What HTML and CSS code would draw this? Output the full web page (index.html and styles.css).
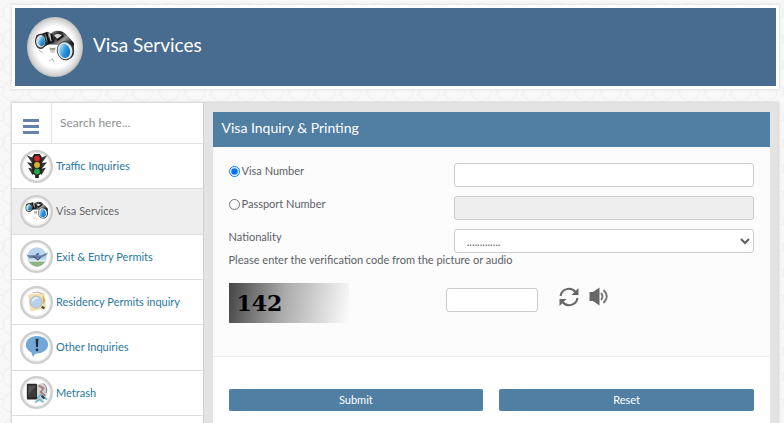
FILE: index.html
```html
<!DOCTYPE html>
<html lang="en">
<head>
    <meta charset="UTF-8">
    <meta name="viewport" content="width=device-width, initial-scale=1.0">
    <title>Visa Services</title>
    <link rel="stylesheet" href="styles.css">
</head>
<body>
<svg width="0" height="0" class="defs" aria-hidden="true">
    <defs>
        <linearGradient id="metal" x1="0" y1="0" x2="1" y2="1">
            <stop offset="0" stop-color="#aaa"/>
            <stop offset="0.3" stop-color="#222"/>
            <stop offset="0.5" stop-color="#999"/>
            <stop offset="0.7" stop-color="#222"/>
            <stop offset="1" stop-color="#111"/>
        </linearGradient>
        <linearGradient id="lens" x1="0" y1="0" x2="1" y2="1">
            <stop offset="0" stop-color="#eef8ff"/>
            <stop offset="0.5" stop-color="#2d9be0"/>
            <stop offset="1" stop-color="#0d5f9f"/>
        </linearGradient>
        <symbol id="binoculars" viewBox="0 0 44 40">
            <path d="M15 9 L20 4 Q28 1 34 7 L42 16 L41 27 L26 18 L14 17Z" fill="url(#metal)"/>
            <path d="M2 8 L14 4 Q21 6 20 15 L10 20Z" fill="url(#metal)"/>
            <path d="M21 8 Q25 5 29 8 L25 12Z" fill="#d8d8d8"/>
            <path d="M13 5 L16 16 M18 6 L20 15 M24 13 L31 8" stroke="#111" stroke-width="2"/>
            <path d="M16 6 L18 14" stroke="#ddd"/>
            <ellipse cx="7" cy="14" rx="6" ry="8" fill="#333"/>
            <ellipse cx="7" cy="14" rx="4.8" ry="6.500" fill="#d5dde2"/>
            <ellipse cx="8" cy="14" rx="3.4" ry="5.200" fill="url(#lens)"/>
            <ellipse cx="33" cy="24" rx="9" ry="10" transform="rotate(-15 33 24)" fill="#333"/>
            <ellipse cx="32.500" cy="24" rx="7.800" ry="9" transform="rotate(-15 32 24)" fill="#dfe6ea"/>
            <ellipse cx="32" cy="24" rx="5.800" ry="7.500" transform="rotate(-15 32 24)" fill="url(#lens)"/>
            <path d="M16 20 Q20 22 23 20 L22 25 Q20 28 17 25Z" fill="#d6c9c9"/>
            <path d="M17 22 H22" stroke="#7b8f6a" stroke-width="1.5"/>
            <path d="M16 35 L19 32 L21 36 M5 23 L9 26" stroke="#aaa" fill="none"/>
        </symbol>
    </defs>
</svg>

<header class="banner">
    <span class="badge badge-large"><svg class="art"><use href="#binoculars"/></svg></span>
    <h1>Visa Services</h1>
</header>

<div class="main">
    <nav class="sidebar">
        <div class="search">
            <button class="menu-btn" type="button" aria-label="Menu"><span></span><span></span><span></span></button>
            <input type="text" placeholder="Search here..." aria-label="Search">
        </div>
        <ul class="menu">
            <li>
                <a href="#">
                    <span class="badge"><svg class="art" viewBox="0 0 26 26">
                        <path d="M4 3 L9 5 L8 9Z M22 3 L17 5 L18 9Z M4 10 L9 11 L8 15Z M22 10 L17 11 L18 15Z M5 16 L9 17 L8 21Z M21 16 L17 17 L18 21Z" fill="#333" stroke="#333" stroke-width="1.5"/>
                        <path d="M10 0 H16 L18 3 V21 L15 23 V26 H11 V23 L8 21 V3Z" fill="#222"/>
                        <circle cx="13" cy="5" r="3.2" fill="#d32525"/>
                        <circle cx="13" cy="12" r="3.2" fill="#d9b526"/>
                        <circle cx="13" cy="19" r="3.2" fill="#22a841"/>
                    </svg></span>
                    Traffic Inquiries
                </a>
            </li>
            <li class="active">
                <a href="#">
                    <span class="badge"><svg class="art"><use href="#binoculars"/></svg></span>
                    Visa Services
                </a>
            </li>
            <li>
                <a href="#">
                    <span class="badge"><svg class="art" viewBox="0 0 26 26">
                        <circle cx="13" cy="13" r="10.5" fill="#b9d4ee"/>
                        <path d="M4 18 Q13 16 22 18 Q18 23.500 13 23.500 Q8 23.500 4 18Z" fill="#8db583"/>
                        <path d="M4 16 H22 V18 H4Z" fill="#e6eef2"/>
                        <path d="M1 10 L4 11 L18 11 L25 8 L23 11 L17 14 L5 14Z" fill="#6d7fa5"/>
                        <path d="M9 12 L14 16 L17 13 M12 11 L15 9" stroke="#495a80" stroke-width="1.5" fill="none"/>
                    </svg></span>
                    Exit &amp; Entry Permits
                </a>
            </li>
            <li>
                <a href="#">
                    <span class="badge"><svg class="art" viewBox="0 0 26 26">
                        <path d="M3 5 L21 3 L23 20 L6 23Z" fill="#eee0b0"/>
                        <path d="M8 3 Q13 1 19 4" stroke="#b5b5a2" fill="none"/>
                        <path d="M19 6 L22 11 L20 16Z" fill="#c9a94f"/>
                        <circle cx="12" cy="13" r="6.500" fill="#b8d0ee" stroke="#b4b6b0"/>
                        <path d="M8 12 Q10 8 14 9" stroke="#e4eefa" stroke-width="2" fill="none"/>
                        <path d="M18 18 L21 20" stroke="#5b4a2c" stroke-width="2.5"/>
                    </svg></span>
                    Residency Permits inquiry
                </a>
            </li>
            <li>
                <a href="#">
                    <span class="badge"><svg class="art" viewBox="0 0 26 26">
                        <path d="M13 1 C20 1 25 5 25 10.500 C25 16 19 20 13 20 Q10 20 9 24 Q7 21 7 19 C4 17 1 15 1 10.500 C1 5 6 1 13 1Z" fill="#72a7d8"/>
                        <path d="M11.500 4 H14.500 L14 13 H12Z" fill="#1d2b3a"/>
                        <circle cx="13" cy="16" r="1.5" fill="#1d2b3a"/>
                    </svg></span>
                    Other Inquiries
                </a>
            </li>
            <li>
                <a href="#">
                    <span class="badge"><svg class="art" viewBox="0 0 26 26">
                        <path d="M12 4 L20 2 L24 9 L23 19 L13 22Z" fill="#d1d2d3"/>
                        <path d="M15 5 L20 8 L17 12 L22 16" stroke="#a87f7a" stroke-width="2" fill="none"/>
                        <path d="M13 19 L17 15 L24 20 M11 23 L16 20 L20 23" stroke="#78b7cd" stroke-width="2" fill="none"/>
                        <path d="M18 16 L21 19" stroke="#2f4058" stroke-width="2.5"/>
                        <path d="M20 3 Q25 6 23 13" stroke="#777" fill="none"/>
                        <rect x="2" y="3" width="11" height="17" rx="1" fill="#292929"/>
                        <path d="M3.500 5 H11.500 V17 H3.500Z" fill="#555"/>
                        <path d="M3.500 15 L11.500 6 V17 H3.500Z" fill="#3c3c3c"/>
                    </svg></span>
                    Metrash
                </a>
            </li>
        </ul>
    </nav>

    <div class="content">
        <form class="panel">
            <h2>Visa Inquiry &amp; Printing</h2>
            <div class="fields">
                <div class="field">
                    <div class="choice">
                        <input type="radio" name="type" id="type-visa" checked>
                        <label for="type-visa">Visa Number</label>
                    </div>
                    <input class="control" type="text" aria-label="Visa Number">
                </div>
                <div class="field">
                    <div class="choice">
                        <input type="radio" name="type" id="type-passport">
                        <label for="type-passport">Passport Number</label>
                    </div>
                    <input class="control" type="text" aria-label="Passport Number" disabled>
                </div>
                <div class="field">
                    <label for="nationality">Nationality</label>
                    <select class="control" id="nationality">
                        <option>.............</option>
                    </select>
                </div>
                <label class="hint" for="code">Please enter the verification code from the picture or audio</label>
                <div class="verify">
                    <div class="captcha">142</div>
                    <input class="control code" type="text" id="code">
                    <button class="icon-btn" type="button" aria-label="Refresh">
                        <svg viewBox="0 0 20 20">
                            <path d="M1.500 9 A8.500 8.500 0 0 1 16.500 5 M18.500 11 A8.500 8.500 0 0 1 3.500 15" fill="none" stroke="#666" stroke-width="2"/>
                            <path d="M19.500 1 V8 H12.500Z M0.500 19 V12 H7.500Z" fill="#666"/>
                        </svg>
                    </button>
                    <button class="icon-btn" type="button" aria-label="Play audio">
                        <svg viewBox="0 0 20 20">
                            <path d="M0.500 5 H4 L10.500 0.500 V18.500 L4 14 H0.500Z" fill="#666"/>
                            <path d="M12 6 Q15 9.500 12 13 M14.500 3 Q21 9.500 14.500 16" fill="none" stroke="#777" stroke-width="2"/>
                        </svg>
                    </button>
                </div>
            </div>
            <div class="actions">
                <button class="btn" type="submit">Submit</button>
                <button class="btn" type="reset">Reset</button>
            </div>
        </form>
    </div>
</div>
</body>
</html>
```

FILE: styles.css
```css
* {
    box-sizing: border-box;
}

body {
    display: flex;
    flex-direction: column;
    min-height: 100vh;
    margin: 0;
    padding: 5px 5px 0 12px;
    background-color: #f8f8f8;
    background-image:
        radial-gradient(circle at 50% 50%, transparent 9px, #efefef 10px, transparent 11px),
        radial-gradient(circle at 0 50%, transparent 3px, #eeeeee 4px, transparent 5px);
    background-size: 26px 26px;
    color: #5b6066;
    font-family: Lato, "Liberation Sans", sans-serif;
    font-size: 11px;
    line-height: 16px;
}

h1,
h2 {
    margin: 0;
    color: white;
    font-weight: normal;
}

input,
select,
button {
    font: inherit;
    color: inherit;
}

.defs {
    position: absolute;
}

.banner {
    display: flex;
    align-items: center;
    gap: 10px;
    height: 84px;
    padding: 0 12px;
    border: 3px solid white;
    background-color: #476c8f;
    box-shadow: 0 0 2px 1px #e2e2e2;
}

.banner h1 {
    font-size: 19px;
    line-height: 24px;
    padding-bottom: 4px;
}

.badge {
    display: flex;
    flex-shrink: 0;
    justify-content: center;
    align-items: center;
    width: 33px;
    height: 33px;
    border: 2px solid #cecece;
    border-radius: 50%;
    background: radial-gradient(circle, white 60%, #dddddd 72%);
}

.art {
    width: 24px;
    height: 24px;
}

.badge-large {
    width: 56px;
    height: 60px;
    border: 1px solid #c4c4c4;
    background: radial-gradient(ellipse, white 50%, #c8c8c8 72%);
}

.badge-large .art {
    width: 42px;
    height: 40px;
}

.main {
    display: flex;
    flex: 1;
    margin: 14px 1px 0 0;
    box-shadow: 0 0 2px 1px #cfcfcf;
}

.sidebar {
    display: flex;
    flex-direction: column;
    width: 25%;
    background-color: white;
    border-right: 1px solid #d0d0d0;
}

.search {
    display: flex;
    height: 41px;
    border-bottom: 1px solid #e2e2e2;
}

.menu-btn {
    display: flex;
    flex-direction: column;
    justify-content: center;
    gap: 3px;
    width: 40px;
    padding: 6px 12px 0 11px;
    border: 0;
    border-right: 1px solid #e2e2e2;
    background: none;
}

.menu-btn span {
    height: 3px;
    background-color: #6583a8;
}

.search input {
    flex: 1;
    min-width: 0;
    padding: 0 8px;
    border: 0;
    background: none;
    font-size: 12px;
}

.search input::placeholder {
    color: #909090;
}

.menu {
    display: flex;
    flex: 1;
    flex-direction: column;
    margin: 0;
    padding: 0 0 7px;
    list-style: none;
}

.menu li {
    flex: 1;
    min-height: 45px;
    border-bottom: 1px solid #dddddd;
}

.menu a {
    display: flex;
    align-items: center;
    gap: 3px;
    height: 100%;
    padding-left: 8px;
    color: #2878a0;
    text-decoration: none;
}

.menu .active {
    background-color: #eeeeee;
}

.menu .active a {
    color: #666666;
}

.content {
    display: flex;
    flex: 1;
    padding: 9px 8px 0 9px;
    background-color: #e3e3e3;
}

.panel {
    flex: 1;
    background-color: white;
}

.panel h2 {
    padding: 6px 9px 9px;
    background-color: #517ea3;
    font-size: 14px;
    line-height: 20px;
}

.fields {
    padding: 16px 16px 33px;
    border-bottom: 1px solid #eeeeee;
    background-color: #fcfcfc;
}

.field {
    display: grid;
    grid-template-columns: 3fr 4fr;
    margin-bottom: 9px;
}

.choice {
    display: flex;
    align-items: flex-start;
    gap: 2px;
}

.choice input {
    width: 11px;
    height: 11px;
    margin: 3px 0 0;
}

.control {
    width: 100%;
    height: 24px;
    padding: 0 8px;
    border: 1px solid #cccccc;
    border-radius: 3px;
    background-color: white;
}

.control:disabled {
    background-color: #eeeeee;
}

.hint {
    display: block;
    margin-top: -10px;
}

.verify {
    display: flex;
    align-items: flex-start;
    margin-top: 15px;
}

.captcha {
    width: 120px;
    height: 40px;
    padding: 2px 8px;
    background: linear-gradient(100deg, #444444, #aaaaaa 45%, #fcfcfc);
    color: black;
    font-family: "DejaVu Serif", serif;
    font-weight: bold;
    font-size: 22px;
    line-height: 36px;
}

.code {
    width: 92px;
    margin: 5px 21px 0 97px;
}

.icon-btn {
    width: 20px;
    height: 20px;
    margin: 4px 10px 0 0;
    padding: 0;
    border: 0;
    background: none;
}

.icon-btn svg {
    display: block;
}

.actions {
    display: flex;
    gap: 16px;
    padding: 32px 16px 0;
}

.btn {
    flex: 1;
    height: 22px;
    padding: 0;
    border: 0;
    border-radius: 2px;
    background-color: #517ea3;
    color: white;
    cursor: pointer;
}
```
